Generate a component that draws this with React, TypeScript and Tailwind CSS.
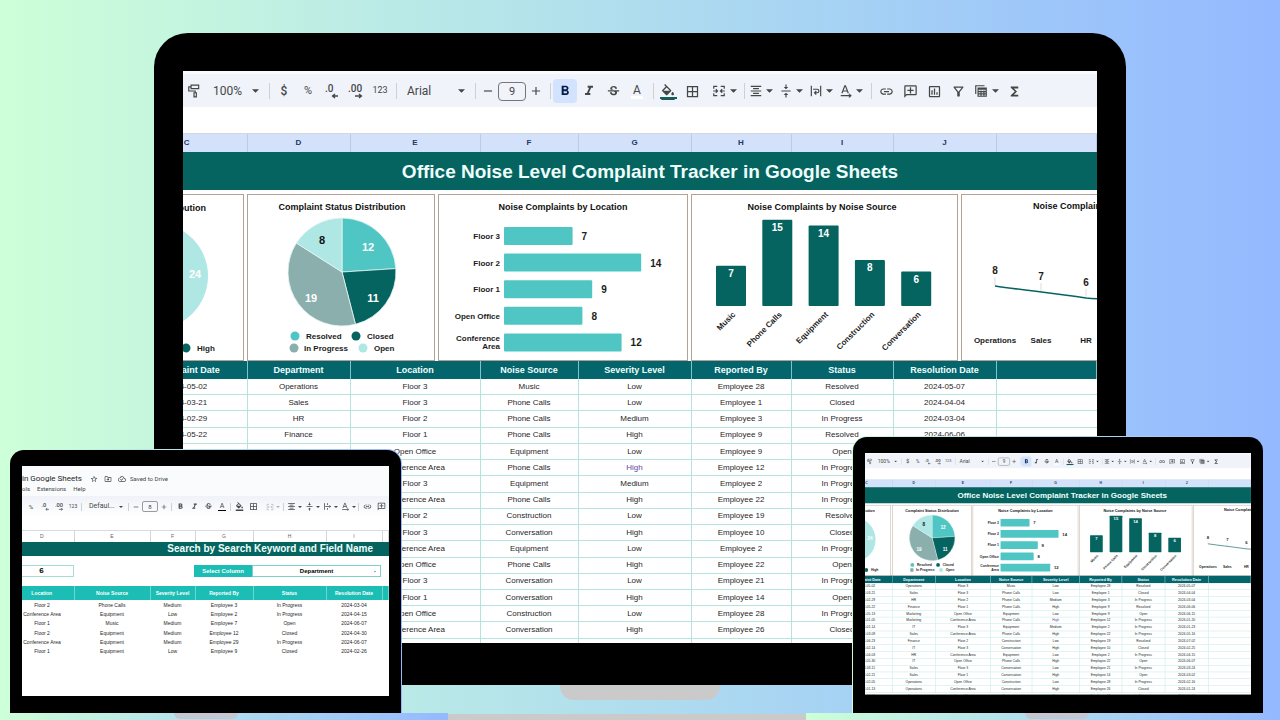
import type { ReactNode } from "react";
import clsx from "clsx";
import {
  MdAdd,
  MdBorderAll,
  MdFormatAlignCenter,
  MdFormatBold,
  MdFormatColorFill,
  MdFormatItalic,
  MdFunctions,
  MdLink,
  MdOutlineAddComment,
  MdOutlineCloudDone,
  MdOutlineDriveFileMove,
  MdOutlineFilterAlt,
  MdOutlineInsertChart,
  MdRemove,
  MdStarBorder,
  MdStrikethroughS,
  MdVerticalAlignCenter,
} from "react-icons/md";

const TEAL = "#4fc6c3";
const DARK = "#05645f";
const GREY = "#8aafad";
const PALE = "#aee7e4";

const LETTERS = ["C", "D", "E", "F", "G", "H", "I", "J", ""];
const HEADERS = [
  "Complaint Date",
  "Department",
  "Location",
  "Noise Source",
  "Severity Level",
  "Reported By",
  "Status",
  "Resolution Date",
  "",
];

const COMPLAINTS = [
  ["2024-05-02", "Operations", "Floor 3", "Music", "Low", "Employee 28", "Resolved", "2024-05-07"],
  ["2024-03-21", "Sales", "Floor 3", "Phone Calls", "Low", "Employee 1", "Closed", "2024-04-04"],
  ["2024-02-29", "HR", "Floor 2", "Phone Calls", "Medium", "Employee 3", "In Progress", "2024-03-04"],
  ["2024-05-22", "Finance", "Floor 1", "Phone Calls", "High", "Employee 9", "Resolved", "2024-06-06"],
  ["2024-05-13", "Marketing", "Open Office", "Equipment", "Low", "Employee 9", "Open", "2024-06-15"],
  ["2024-01-05", "Marketing", "Conference Area", "Phone Calls", "High", "Employee 12", "In Progress", "2024-01-20"],
  ["2024-01-14", "IT", "Floor 3", "Equipment", "Medium", "Employee 2", "In Progress", "2024-01-23"],
  ["2024-03-09", "Sales", "Conference Area", "Phone Calls", "High", "Employee 22", "In Progress", "2024-05-16"],
  ["2024-06-23", "Finance", "Floor 2", "Construction", "Low", "Employee 19", "Resolved", "2024-07-02"],
  ["2024-02-14", "IT", "Floor 3", "Conversation", "High", "Employee 10", "Closed", "2024-02-25"],
  ["2024-04-03", "HR", "Conference Area", "Equipment", "Low", "Employee 2", "In Progress", "2024-04-15"],
  ["2024-05-30", "IT", "Open Office", "Phone Calls", "High", "Employee 22", "Open", "2024-06-07"],
  ["2024-03-11", "Sales", "Floor 3", "Conversation", "Low", "Employee 21", "In Progress", "2024-03-24"],
  ["2024-02-21", "Sales", "Floor 1", "Conversation", "High", "Employee 14", "Open", "2024-03-02"],
  ["2024-02-05", "Operations", "Open Office", "Construction", "Low", "Employee 28", "In Progress", "2024-02-16"],
  ["2024-01-13", "Operations", "Conference Area", "Conversation", "High", "Employee 26", "Closed", "2024-01-24"],
  ["2024-06-01", "Finance", "Open Office", "Equipment", "High", "Employee 18", "In Progress", "2024-06-12"],
];

const RESULTS = [
  ["Floor 2", "Phone Calls", "Medium", "Employee 3", "In Progress", "2024-03-04"],
  ["Conference Area", "Equipment", "Low", "Employee 2", "In Progress", "2024-04-15"],
  ["Floor 1", "Music", "Medium", "Employee 7", "Open", "2024-06-07"],
  ["Floor 2", "Equipment", "Medium", "Employee 12", "Closed", "2024-04-30"],
  ["Conference Area", "Equipment", "Medium", "Employee 29", "In Progress", "2024-06-07"],
  ["Floor 1", "Equipment", "Low", "Employee 9", "Closed", "2024-02-26"],
];

/* ---------- icons ---------- */

function Caret({ className }: { className: string }) {
  return (
    <svg viewBox="0 0 8 4" className={className} fill="currentColor">
      <path d="M0 0h8L4 4z" />
    </svg>
  );
}

function Stroke({ className, children }: { className: string; children: ReactNode }) {
  return (
    <svg viewBox="0 0 24 24" className={className} fill="none" stroke="currentColor" strokeWidth="2">
      {children}
    </svg>
  );
}

function RollerIcon({ className }: { className: string }) {
  return (
    <Stroke className={className}>
      <path d="M7 2h13v6H7zM7 5H3v7h11v3M12 15h4v7h-4z" />
    </Stroke>
  );
}

function MergeIcon({ className }: { className: string }) {
  return (
    <Stroke className={className}>
      <path d="M3 8V4h6M15 4h6v4M3 16v4h6M15 20h6v-4M2 12h7M22 12h-7M6.500 9l3 3-3 3M17.500 9l-3 3 3 3" />
    </Stroke>
  );
}

function WrapIcon({ className }: { className: string }) {
  return (
    <Stroke className={className}>
      <path d="M4 3v18M20 3v18M7 9h7a3 3 0 0 1 0 6h-4M12.500 12l-3 3 3 3" />
    </Stroke>
  );
}

function OverflowIcon({ className }: { className: string }) {
  return (
    <Stroke className={className}>
      <path d="M4 3v18M12 3v5M12 16v5M6 12h14M17 9l3.500 3-3.500 3" />
    </Stroke>
  );
}

function RotateIcon({ className }: { className: string }) {
  return (
    <Stroke className={className}>
      <path d="M5 16l5-13h1l5 13M7 12h7M3 20h17M17 17l3.500 3-3.500 3" />
    </Stroke>
  );
}

function SheetViewsIcon({ className }: { className: string }) {
  return (
    <Stroke className={className}>
      <path d="M3 17V3h15M7 7h14v14H7zM7 9h14M7 13h14M7 17h14M12 11v10M17 11v10M7 8h14" />
    </Stroke>
  );
}

function DecimalIcon({ digits, more, small }: { digits: string; more?: boolean; small?: boolean }) {
  return (
    <svg viewBox="0 0 16 16" className={small ? "size-[9px]" : "size-4"} fill="currentColor">
      <text x={more ? 0 : 1} y="9" fontSize="10" fontWeight="500">
        {digits}
      </text>
      <path
        d={more ? "M7 13h6M11 11l2.500 2-2.500 2" : "M14 13H9M11 11l-2.500 2 2.500 2"}
        fill="none"
        stroke="currentColor"
        strokeWidth="1.3"
      />
    </svg>
  );
}

/* ---------- toolbar ---------- */

type BtnProps = { label: string; small?: boolean; active?: boolean; children: ReactNode };

function Btn({ label, small, active, children }: BtnProps) {
  return (
    <button
      type="button"
      aria-label={label}
      className={clsx(
        "flex shrink-0 items-center justify-center",
        small ? "h-3 w-3.5" : "h-6 w-6 rounded-sm",
        active && "bg-[#d3e3fd] text-[#041e49]",
      )}
    >
      {children}
    </button>
  );
}

function MenuBtn({ label, small, className, children }: BtnProps & { className: string }) {
  return (
    <button type="button" aria-label={label} className={clsx("flex shrink-0 items-center", className)}>
      {children}
      <Caret className={small ? "h-0.5 w-1" : "h-1 w-[7px]"} />
    </button>
  );
}

function Sep({ small }: { small?: boolean }) {
  return <span className={clsx("w-px shrink-0 bg-[#cdd1d6]", small ? "mx-px h-2" : "mr-0.5 ml-1 h-4")} />;
}

function DashboardToolbar({ idPrefix }: { idPrefix: string }) {
  const icon = "size-[15px]";
  return (
    <div className="flex h-9 items-center border-t-3 border-[#f9fafc] bg-[#f0f3f9] pt-px font-[Roboto,sans-serif] text-[12px] text-[#444746]">
      <div className="flex w-[22px] shrink-0 justify-center">
        <RollerIcon className="size-3.5" />
      </div>
      <MenuBtn label="Zoom" className="w-15 justify-between pr-1.5 pl-2">
        <span>100%</span>
      </MenuBtn>
      <Sep />
      <Btn label="Currency">
        <span className="font-medium">$</span>
      </Btn>
      <Btn label="Percent">
        <span className="text-[11px]">%</span>
      </Btn>
      <Btn label="Decrease decimals">
        <DecimalIcon digits=".0" />
      </Btn>
      <Btn label="Increase decimals">
        <DecimalIcon digits=".00" more />
      </Btn>
      <Btn label="More formats">
        <span className="text-[9px]">123</span>
      </Btn>
      <Sep />
      <MenuBtn label="Font" className="w-18 justify-between pr-1.5 pl-2">
        <span>Arial</span>
      </MenuBtn>
      <Sep />
      <button type="button" aria-label="Smaller" className="flex w-5 shrink-0 justify-center">
        <MdRemove className="size-3.5" />
      </button>
      <input
        id={`${idPrefix}-size`}
        aria-label="Font size"
        defaultValue="9"
        className="h-[19px] w-7 shrink-0 rounded-sm border border-[#747775] text-center text-[11px]"
      />
      <button type="button" aria-label="Larger" className="flex w-5 shrink-0 justify-center">
        <MdAdd className="size-3.5" />
      </button>
      <Sep />
      <Btn label="Bold" active>
        <MdFormatBold className="size-4" />
      </Btn>
      <Btn label="Italic">
        <MdFormatItalic className="size-4" />
      </Btn>
      <Btn label="Strikethrough">
        <MdStrikethroughS className={icon} />
      </Btn>
      <Btn label="Text color">
        <span className="border-b-3 border-white px-0.5 leading-3">A</span>
      </Btn>
      <Sep />
      <Btn label="Fill color">
        <span className="flex flex-col items-center">
          <MdFormatColorFill className="-mb-[3px] size-4" />
          <span className="h-[2px] w-[17px] bg-[#05645f]" />
        </span>
      </Btn>
      <Btn label="Borders">
        <MdBorderAll className={icon} />
      </Btn>
      <MenuBtn label="Merge cells" className="w-9 gap-1 pl-2">
        <MergeIcon className="size-3.5" />
      </MenuBtn>
      <Sep />
      <MenuBtn label="Horizontal align" className="w-[30px] gap-[3px] pl-0.5">
        <MdFormatAlignCenter className="size-3.5" />
      </MenuBtn>
      <MenuBtn label="Vertical align" className="w-[30px] gap-[3px] pl-0.5">
        <MdVerticalAlignCenter className="size-3.5" />
      </MenuBtn>
      <MenuBtn label="Text wrapping" className="w-[30px] gap-[3px] pl-0.5">
        <WrapIcon className="size-3.5" />
      </MenuBtn>
      <MenuBtn label="Text rotation" className="w-[30px] gap-[3px] pl-0.5">
        <RotateIcon className="size-3.5" />
      </MenuBtn>
      <Sep />
      <Btn label="Insert link">
        <MdLink className={icon} />
      </Btn>
      <Btn label="Insert comment">
        <MdOutlineAddComment className={clsx(icon, "-scale-x-100")} />
      </Btn>
      <Btn label="Insert chart">
        <MdOutlineInsertChart className={icon} />
      </Btn>
      <Btn label="Create a filter">
        <MdOutlineFilterAlt className={icon} />
      </Btn>
      <MenuBtn label="Table views" className="w-8 gap-1 pl-1">
        <SheetViewsIcon className="size-3.5" />
      </MenuBtn>
      <Btn label="Functions">
        <MdFunctions className={icon} />
      </Btn>
    </div>
  );
}

function SearchToolbar() {
  const icon = "size-[9px]";
  const group = "w-[18px] gap-0.5 pl-0.5";
  return (
    <div className="flex h-[21px] items-center bg-linear-to-b from-[#eff2f9] to-white pl-0.5 font-[Roboto,sans-serif] text-[7px] text-[#444746]">
      <Btn label="Percent" small>
        <span className="text-[6px]">%</span>
      </Btn>
      <Btn label="Decrease decimals" small>
        <DecimalIcon digits=".0" small />
      </Btn>
      <Btn label="Increase decimals" small>
        <DecimalIcon digits=".00" more small />
      </Btn>
      <Btn label="More formats" small>
        <span className="text-[5px]">123</span>
      </Btn>
      <Sep small />
      <MenuBtn label="Font" small className="w-11 justify-between pr-1 pl-1.5">
        <span>Defaul...</span>
      </MenuBtn>
      <Sep small />
      <button type="button" aria-label="Smaller" className="flex w-3 shrink-0 justify-center">
        <MdRemove className="size-2" />
      </button>
      <input
        id="search-size"
        aria-label="Font size"
        defaultValue="8"
        className="h-[11px] w-4 shrink-0 rounded-xs border border-[#9a9c9b] text-center text-[6px]"
      />
      <button type="button" aria-label="Larger" className="flex w-3 shrink-0 justify-center">
        <MdAdd className="size-2" />
      </button>
      <Sep small />
      <Btn label="Bold" small>
        <MdFormatBold className={icon} />
      </Btn>
      <Btn label="Italic" small>
        <MdFormatItalic className={icon} />
      </Btn>
      <Btn label="Strikethrough" small>
        <MdStrikethroughS className={icon} />
      </Btn>
      <Btn label="Text color" small>
        <span className="border-b border-black px-0.5 leading-[7px]">A</span>
      </Btn>
      <Sep small />
      <Btn label="Fill color" small>
        <MdFormatColorFill className={icon} />
      </Btn>
      <Btn label="Borders" small>
        <MdBorderAll className={icon} />
      </Btn>
      <MenuBtn label="Merge cells" small className="w-[22px] gap-0.5 pl-1.5 opacity-40">
        <MergeIcon className="size-2" />
      </MenuBtn>
      <Sep small />
      <MenuBtn label="Horizontal align" small className={group}>
        <MdFormatAlignCenter className={icon} />
      </MenuBtn>
      <MenuBtn label="Vertical align" small className={group}>
        <MdVerticalAlignCenter className={icon} />
      </MenuBtn>
      <MenuBtn label="Text wrapping" small className={group}>
        <OverflowIcon className={icon} />
      </MenuBtn>
      <MenuBtn label="Text rotation" small className={group}>
        <RotateIcon className={icon} />
      </MenuBtn>
      <Sep small />
      <Btn label="Insert link" small>
        <MdLink className={icon} />
      </Btn>
      <Btn label="Insert comment" small>
        <MdOutlineAddComment className={clsx(icon, "-scale-x-100")} />
      </Btn>
    </div>
  );
}

/* ---------- charts ---------- */

function ChartCard({ className, children }: { className: string; children: ReactNode }) {
  return (
    <div className={clsx("h-[167px] overflow-hidden border border-[#b3a294] bg-white", className)}>
      <svg className="h-full w-full font-bold" fill="#1c1c1c" fontSize="8">
        {children}
      </svg>
    </div>
  );
}

type TitleProps = { x: number; y?: number; anchor?: "start" | "middle" | "end"; children: ReactNode };

function Title({ x, y = 15, anchor = "middle", children }: TitleProps) {
  return (
    <text x={x} y={y} fontSize="9" fill="#111" textAnchor={anchor}>
      {children}
    </text>
  );
}

function SeverityChart() {
  return (
    <ChartCard className="w-[61px] shrink-0 border-l-0">
      <Title x={23} y={16} anchor="end">
        Severity Level Distribution
      </Title>
      <circle cx="-28" cy="81" r="53" fill={PALE} />
      <text x="12" y="83" fontSize="11" fill="#fff" textAnchor="middle">
        24
      </text>
      <circle cx="3" cy="153" r="4.500" fill={DARK} />
      <text x="14" y="156">
        High
      </text>
    </ChartCard>
  );
}

const STATUS = [
  { name: "Resolved", value: 12, color: TEAL, label: [120, 56], dot: [47, 141], text: 58 },
  { name: "Closed", value: 11, color: DARK, label: [125, 107], dot: [108, 141], text: 119 },
  { name: "In Progress", value: 19, color: GREY, label: [63, 107], dot: [46, 153], text: 56 },
  { name: "Open", value: 8, color: PALE, label: [74, 49], dot: [115, 153], text: 126 },
];

function StatusChart() {
  const cx = 94;
  const cy = 77;
  const r = 54;
  const total = STATUS.reduce((sum, s) => sum + s.value, 0);
  let start = 0;
  return (
    <ChartCard className="w-[188px] shrink-0">
      <Title x={94}>Complaint Status Distribution</Title>
      {STATUS.map((s) => {
        const a = (start / total) * Math.PI * 2;
        start += s.value;
        const b = (start / total) * Math.PI * 2;
        return (
          <path
            key={s.name}
            fill={s.color}
            stroke="#e6f5f4"
            strokeWidth="0.8"
            d={`M${cx} ${cy}L${cx + r * Math.sin(a)} ${cy - r * Math.cos(a)}A${r} ${r} 0 0 1 ${cx + r * Math.sin(b)} ${cy - r * Math.cos(b)}Z`}
          />
        );
      })}
      {STATUS.map((s) => (
        <g key={s.name}>
          <text x={s.label[0]} y={s.label[1]} fontSize="11" fill={s.name === "Open" ? "#111" : "#fff"} textAnchor="middle">
            {s.value}
          </text>
          <circle cx={s.dot[0]} cy={s.dot[1]} r="4.500" fill={s.color} />
          <text x={s.text} y={s.dot[1] + 3}>
            {s.name}
          </text>
        </g>
      ))}
    </ChartCard>
  );
}

const LOCATIONS = [
  { name: ["Floor 3"], value: 7 },
  { name: ["Floor 2"], value: 14 },
  { name: ["Floor 1"], value: 9 },
  { name: ["Open Office"], value: 8 },
  { name: ["Conference", "Area"], value: 12 },
];

function LocationChart() {
  return (
    <ChartCard className="w-[250px] shrink-0">
      <Title x={124}>Noise Complaints by Location</Title>
      {LOCATIONS.map((l, i) => {
        const mid = 41 + i * 26.6;
        const width = l.value * 9.8;
        return (
          <g key={l.name[0]}>
            <rect x="65" y={mid - 9} width={width} height="18" rx="1" fill={TEAL} />
            <text x={width + 74} y={mid + 4} fontSize="10">
              {l.value}
            </text>
            {l.name.map((line, n) => (
              <text key={line} x="61" y={mid + 3 + n * 8 - (l.name.length - 1) * 4} textAnchor="end">
                {line}
              </text>
            ))}
          </g>
        );
      })}
    </ChartCard>
  );
}

const SOURCES = [
  { name: "Music", value: 7 },
  { name: "Phone Calls", value: 15 },
  { name: "Equipment", value: 14 },
  { name: "Construction", value: 8 },
  { name: "Conversation", value: 6 },
];

function SourceChart() {
  return (
    <ChartCard className="w-[267px] shrink-0">
      <Title x={130}>Noise Complaints by Noise Source</Title>
      {SOURCES.map((s, i) => {
        const mid = 39 + i * 46.3;
        const height = s.value * 5.75;
        return (
          <g key={s.name}>
            <rect x={mid - 15} y={111 - height} width="30" height={height} rx="1" fill={DARK} />
            <text x={mid} y={122 - height} fontSize="10" fill="#fff" textAnchor="middle">
              {s.value}
            </text>
            <text textAnchor="end" transform={`translate(${mid + 5} 120) rotate(-45)`}>
              {s.name}
            </text>
          </g>
        );
      })}
    </ChartCard>
  );
}

const DEPARTMENTS = [
  { name: "Operations", value: 8, x: 33, y: 91 },
  { name: "Sales", value: 7, x: 79, y: 97 },
  { name: "HR", value: 6, x: 124, y: 103 },
];

function DepartmentChart() {
  return (
    <ChartCard className="min-w-0 flex-1 border-r-0">
      <Title x={71} y={14} anchor="start">
        Noise Complaints by Department
      </Title>
      {DEPARTMENTS.map((d) => (
        <g key={d.name}>
          <path d={`M${d.x} ${d.y}v-9`} stroke="#ddd" />
          <text x={d.x} y={d.y - 12} fontSize="10" textAnchor="middle">
            {d.value}
          </text>
          <text x={d.x} y="148" textAnchor="middle">
            {d.name}
          </text>
        </g>
      ))}
      <path d="M33 91C60 95 90 98 124 103Q135 104 150 104" fill="none" stroke={DARK} strokeWidth="1.5" />
    </ChartCard>
  );
}

/* ---------- sheets ---------- */

function DashboardColumns() {
  return (
    <colgroup>
      <col className="w-[120px]" />
      <col className="w-[103px]" />
      <col className="w-[130px]" />
      <col className="w-[98px]" />
      <col className="w-[113px]" />
      <col className="w-[100px]" />
      <col className="w-[102px]" />
      <col className="w-[103px]" />
      <col />
    </colgroup>
  );
}

function DashboardSheet({ id }: { id: string }) {
  return (
    <div className="h-[572px] overflow-hidden bg-white font-['Liberation_Sans',Arial,sans-serif]">
      <DashboardToolbar idPrefix={id} />
      <div className="h-[27px] border-b border-[#d5d9de]" />
      <table className="-ml-14 w-[calc(100%+56px)] table-fixed border-collapse">
        <DashboardColumns />
        <thead>
          <tr className="h-[18px] bg-[#d3e1fb] text-[8px] leading-4 text-[#23395d]">
            {LETTERS.map((l, i) => (
              <th key={i} className="border-r border-[#bccbe2] p-0 font-bold">
                {l}
              </th>
            ))}
          </tr>
        </thead>
      </table>
      <h1 className="h-[38px] bg-[#05645f] pl-5 text-center text-[19px] leading-10 font-bold whitespace-nowrap text-[#effffd]">
        Office Noise Level Complaint Tracker in Google Sheets
      </h1>
      <div className="flex gap-[3px] pt-1">
        <SeverityChart />
        <StatusChart />
        <LocationChart />
        <SourceChart />
        <DepartmentChart />
      </div>
      <table className="-ml-14 h-[294px] w-[calc(100%+56px)] table-fixed border-collapse text-center text-[8px] leading-[14px] text-[#1f1f1f]">
        <DashboardColumns />
        <thead>
          <tr className="h-[18px] bg-[#05656d] text-[9px] text-[#effffd]">
            {HEADERS.map((h, i) => (
              <th key={i} className="border-r border-[#7fc4c4] p-0 font-bold whitespace-nowrap">
                {h}
              </th>
            ))}
          </tr>
        </thead>
        <tbody>
          {COMPLAINTS.map((row, r) => (
            <tr key={r} className="border-b border-[#b5e4df]">
              {row.map((cell, c) => (
                <td
                  key={c}
                  className={clsx("border-r border-[#b5e4df] p-0 whitespace-nowrap", r === 5 && c === 4 && "text-[#6b3fa0]")}
                >
                  {cell}
                </td>
              ))}
              <td className="p-0" />
            </tr>
          ))}
        </tbody>
      </table>
    </div>
  );
}

function SearchColumns() {
  return (
    <colgroup>
      <col className="w-16" />
      <col className="w-[76px]" />
      <col className="w-[45px]" />
      <col className="w-[58px]" />
      <col className="w-[73px]" />
      <col className="w-14" />
      <col />
    </colgroup>
  );
}

function SearchSheet() {
  const table = "-ml-3 w-[calc(100%+12px)] table-fixed border-collapse text-center text-[5px]";
  return (
    <div className="h-[230px] overflow-hidden bg-white font-['Liberation_Sans',Arial,sans-serif]">
      <header className="h-[30px] bg-[#f9fbfd] pt-2 font-[Roboto,sans-serif] text-[#444746]">
        <div className="flex h-[9px] items-center whitespace-nowrap">
          <span className="text-[8px] text-[#1f1f1f]">in Google Sheets</span>
          <MdStarBorder className="ml-2 size-2" />
          <MdOutlineDriveFileMove className="ml-1.5 size-2" />
          <MdOutlineCloudDone className="ml-1.5 size-2" />
          <span className="ml-1 text-[6px]">Saved to Drive</span>
        </div>
        <nav className="flex h-[11px] items-center gap-[7px] text-[6px]">
          <a href="#tools">ols</a>
          <a href="#extensions">Extensions</a>
          <a href="#help">Help</a>
        </nav>
      </header>
      <SearchToolbar />
      <div className="h-[14px] border-b border-[#d9dcdf]" />
      <table className={table}>
        <SearchColumns />
        <thead>
          <tr className="h-[11px] text-[#5f6368]">
            {["D", "E", "F", "G", "H", "I", ""].map((l, i) => (
              <th key={i} className="border-r border-[#d3d6d9] p-0 font-normal">
                {l}
              </th>
            ))}
          </tr>
        </thead>
      </table>
      <h2 className="h-[14px] bg-[#05645f] pr-4 text-right text-[10px] leading-[14px] font-bold whitespace-nowrap text-[#effffd]">
        Search by Search Keyword and Field Name
      </h2>
      <div className="flex h-[30px] items-center justify-between pr-2 text-center font-bold">
        <span className="h-3 w-[52px] border border-l-0 border-[#a4dcd9] pr-3 text-[8px] leading-[10px]">6</span>
        <div className="flex h-3 w-[187px]">
          <label htmlFor="column" className="w-[58px] bg-[#1bbdb4] text-[6px] leading-3 text-white">
            Select Column
          </label>
          <div className="relative flex flex-1 items-center border border-[#7fcfca]">
            <select
              id="column"
              defaultValue="Department"
              className="w-full appearance-none text-center text-[6px] leading-[10px] text-black [text-align-last:center]"
            >
              <option>Department</option>
            </select>
            <Caret className="pointer-events-none absolute right-1 h-px w-0.5 text-[#444]" />
          </div>
        </div>
      </div>
      <table className={clsx(table, "h-[70px] leading-[8px]")}>
        <SearchColumns />
        <thead>
          <tr className="h-[14px] bg-[#1bbdb4] text-white">
            {["Location", "Noise Source", "Severity Level", "Reported By", "Status", "Resolution Date", ""].map((h, i) => (
              <th key={i} className="border-r border-[#6fd5cf] p-0 font-bold whitespace-nowrap">
                {h}
              </th>
            ))}
          </tr>
        </thead>
        <tbody className="text-[#1f1f1f]">
          {RESULTS.map((row, r) => (
            <tr key={r}>
              {row.map((cell, c) => (
                <td key={c} className="p-0 whitespace-nowrap">
                  {cell}
                </td>
              ))}
              <td className="p-0" />
            </tr>
          ))}
        </tbody>
      </table>
    </div>
  );
}

/* ---------- page ---------- */

export default function App() {
  return (
    <main className="relative h-screen overflow-hidden bg-linear-to-r from-[#cdffd8] to-[#94b9ff] pt-[33px]">
      <section className="mx-auto w-[972px] rounded-t-[34px] bg-black px-[29px] pt-[38px] pb-[42px]">
        <DashboardSheet id="main" />
      </section>
      <div className="mx-auto h-[15px] w-40 rounded-b-[14px] bg-[#cbcacb]" />

      <div className="absolute right-0 bottom-0 left-0 flex h-[7px] items-end">
        <div className="flex h-full w-[35%] justify-center bg-linear-to-r from-[#cdffd8] to-[#94b9ff] pr-9">
          <div className="h-1.5 w-16 rounded-b-md bg-[#c5c6cf]" />
        </div>
        <div className="h-1.5 flex-1 bg-[#cbcacb]" />
        <div className="flex h-full w-[37%] justify-center bg-linear-to-r from-[#cdffd8] to-[#94b9ff] pl-7">
          <div className="h-1.5 w-16 rounded-b-md bg-[#c5c6cf]" />
        </div>
      </div>

      <div className="absolute bottom-[7px] left-[9px] rounded-t-[15px] bg-linear-to-r from-[#cdffd8] to-[#94b9ff] p-px pb-0">
        <section className="rounded-t-[14px] bg-black px-3 pt-4 pb-[17px]">
          <div className="w-[367px]">
            <SearchSheet />
          </div>
        </section>
      </div>

      <div className="absolute right-[16px] bottom-[7px] rounded-t-[15px] bg-linear-to-r from-[#cdffd8] to-[#94b9ff] p-px pb-0">
        <section className="rounded-t-[14px] bg-black px-3 pt-4 pb-[18px]">
          <div className="h-[242px] w-[386px] overflow-hidden">
            <div className="w-[914px] origin-top-left scale-[0.4223]">
              <DashboardSheet id="preview" />
            </div>
          </div>
        </section>
      </div>
    </main>
  );
}
